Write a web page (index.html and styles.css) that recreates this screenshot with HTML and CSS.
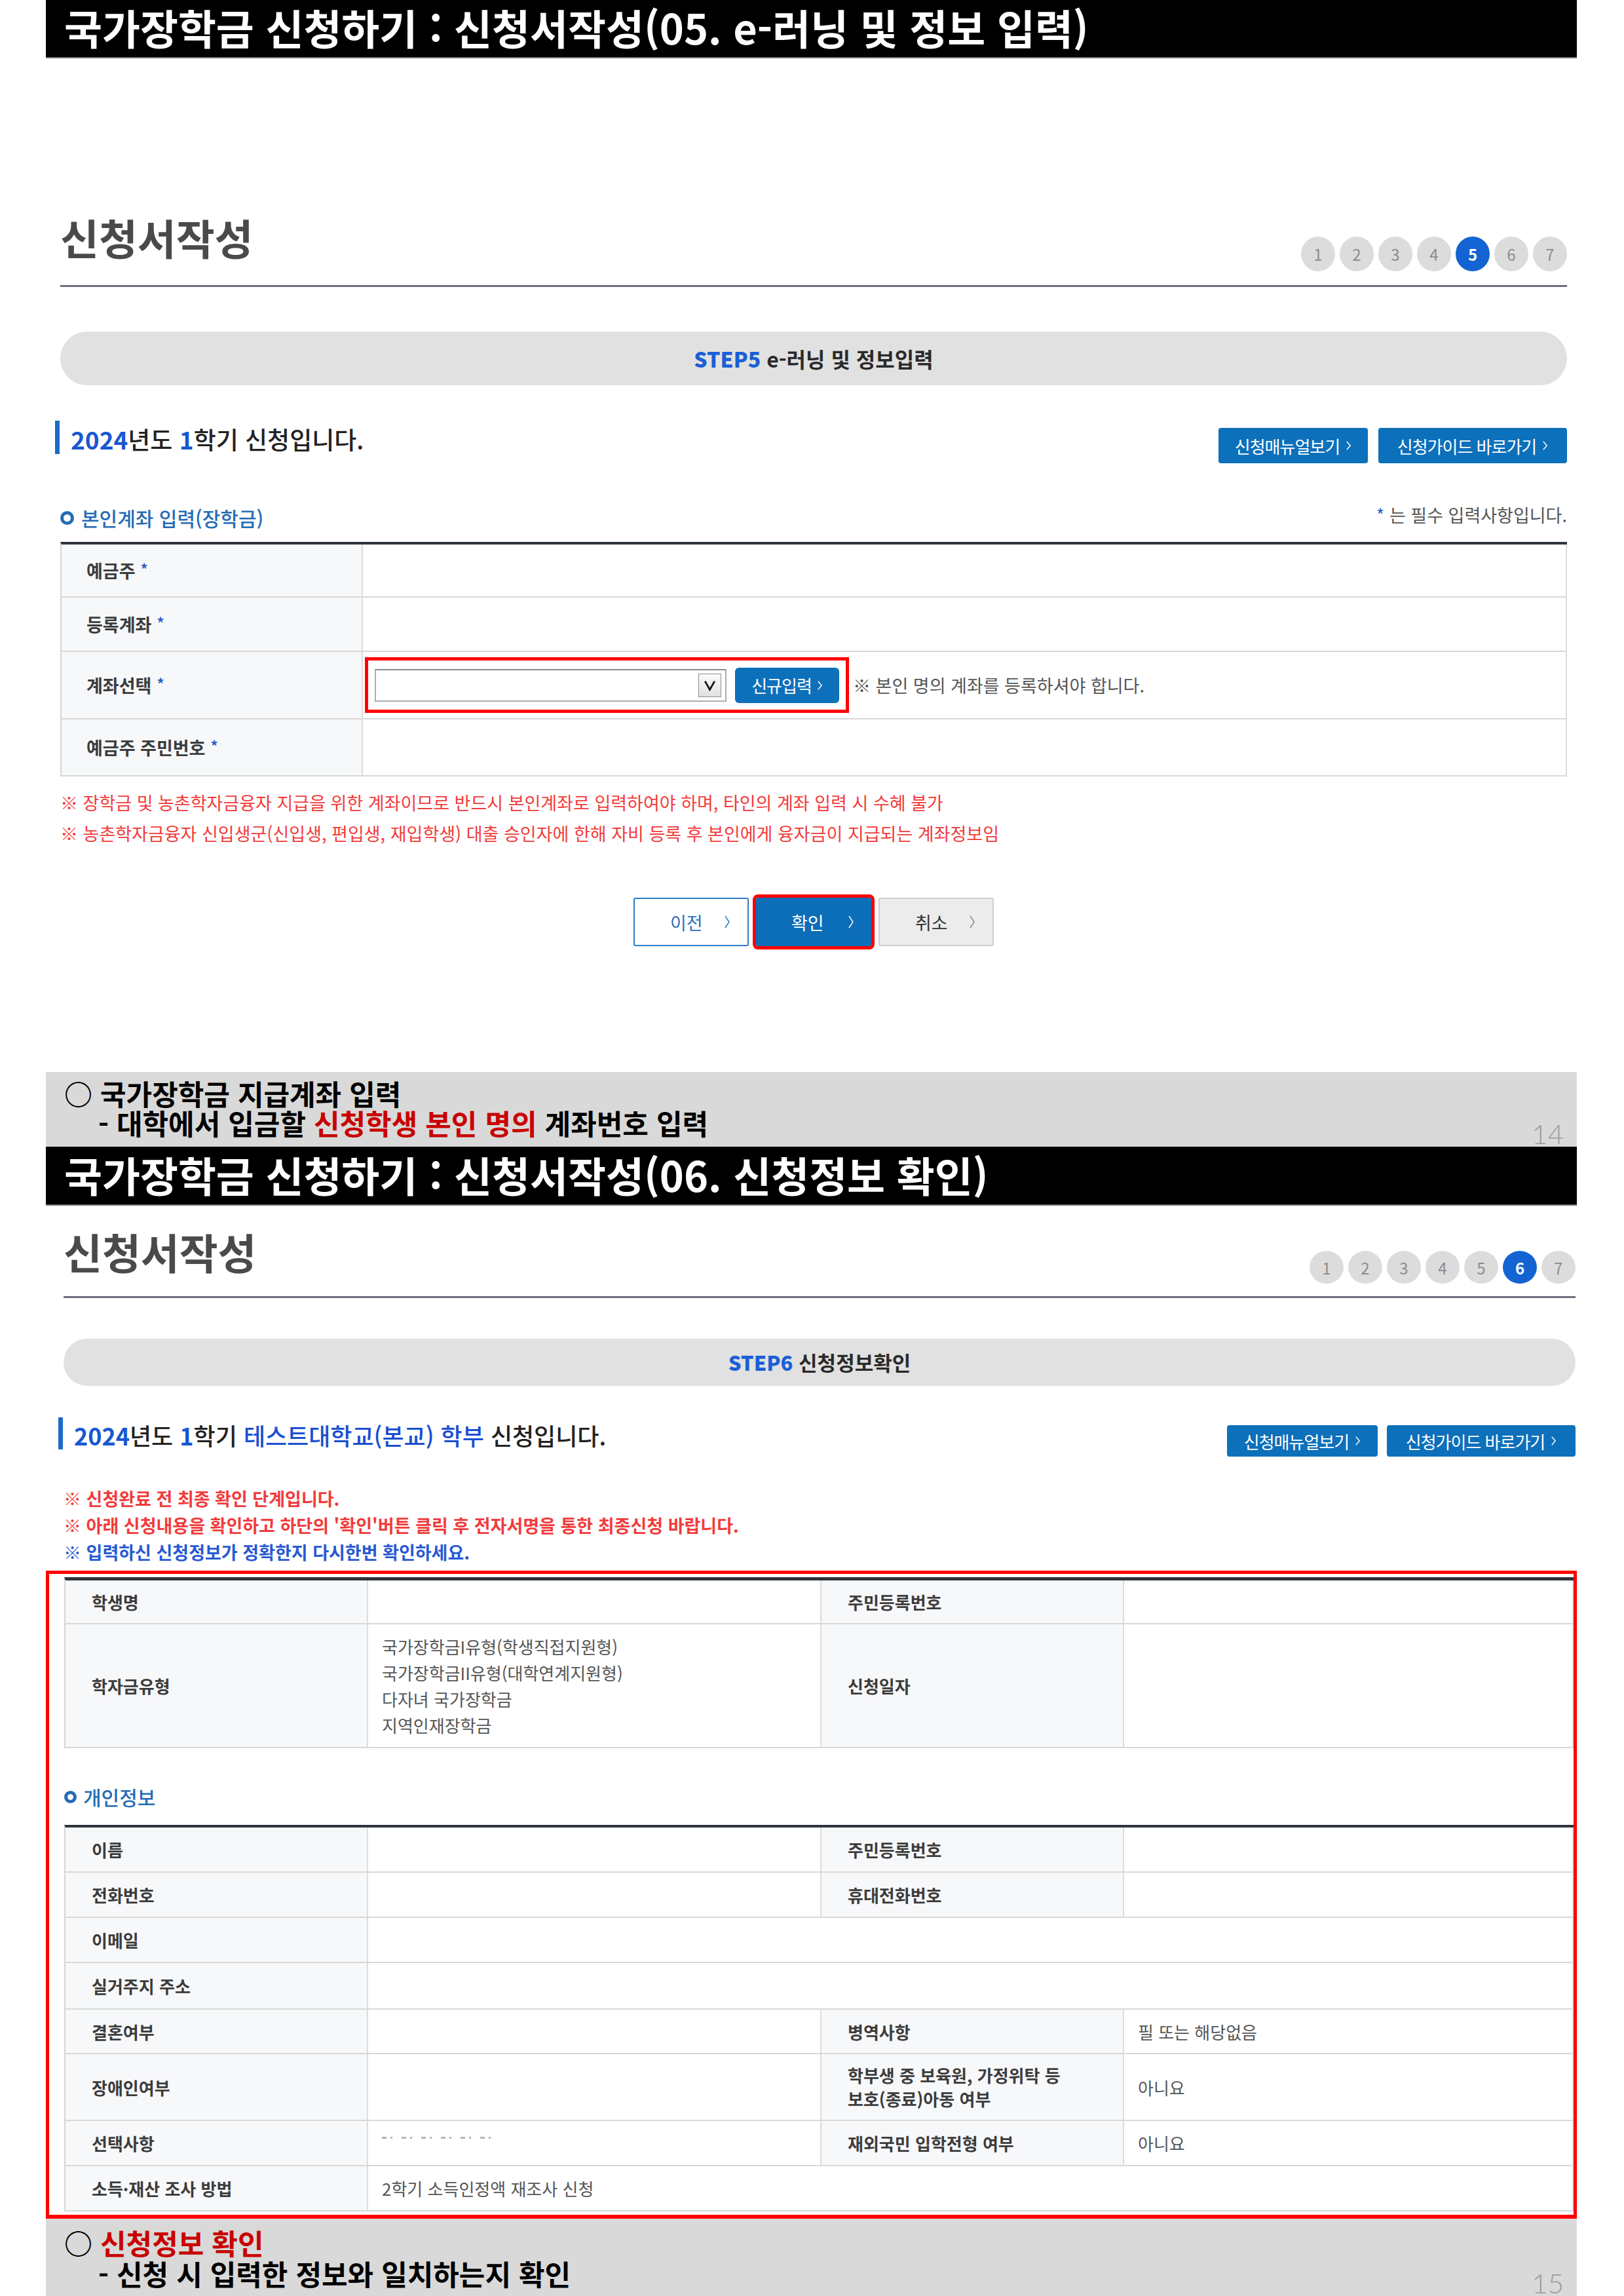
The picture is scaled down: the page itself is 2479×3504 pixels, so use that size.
FILE: index.html
```html
<!DOCTYPE html>
<html lang="ko">
<head>
<meta charset="utf-8">
<title>국가장학금 신청하기</title>
<link rel="stylesheet" href="styles.css">
</head>
<body>
<section class="slide slide-1">
  <h1 class="slide-title">국가장학금 신청하기 : 신청서작성(05. e-러닝 및 정보 입력)</h1>
  <div class="content content-1">
    <div class="page-head">
      <h2 class="page-title">신청서작성</h2>
      <ol class="steps">
        <li>1</li><li>2</li><li>3</li><li>4</li><li class="on">5</li><li>6</li><li>7</li>
      </ol>
    </div>
    <div class="step-pill"><b>STEP5</b> e-러닝 및 정보입력</div>
    <div class="term-row">
      <p class="term"><b>2024</b>년도 <b>1</b>학기 신청입니다.</p>
      <div class="guide-btns">
        <a class="btn-guide g1">신청매뉴얼보기 <svg class="chev" viewBox="0 0 10 20"><path d="M2 3 8 10 2 17"/></svg></a>
        <a class="btn-guide g2">신청가이드 바로가기 <svg class="chev" viewBox="0 0 10 20"><path d="M2 3 8 10 2 17"/></svg></a>
      </div>
    </div>
    <div class="sub-head">
      <h3 class="sub-title"><span class="ring"></span>본인계좌 입력(장학금)</h3>
      <p class="req-note"><span class="star">*</span> 는 필수 입력사항입니다.</p>
    </div>
    <div class="form-table t1">
      <div class="th">예금주<span class="star">*</span></div><div class="td"></div>
      <div class="th">등록계좌<span class="star">*</span></div><div class="td"></div>
      <div class="th">계좌선택<span class="star">*</span></div>
      <div class="td">
        <div class="mark-box">
          <div class="select-box"><span class="sel-arrow"><svg viewBox="0 0 36 36"><path d="M10 11 18 25 26 11"/></svg></span></div>
          <a class="btn-new">신규입력 <svg class="chev" viewBox="0 0 10 20"><path d="M2 3 8 10 2 17"/></svg></a>
        </div>
        <span class="acc-note">※ 본인 명의 계좌를 등록하셔야 합니다.</span>
      </div>
      <div class="th">예금주 주민번호<span class="star">*</span></div><div class="td"></div>
    </div>
    <ul class="warn warn-1">
      <li>※ 장학금 및 농촌학자금융자 지급을 위한 계좌이므로 반드시 본인계좌로 입력하여야 하며, 타인의 계좌 입력 시 수혜 불가</li>
      <li>※ 농촌학자금융자 신입생군(신입생, 편입생, 재입학생) 대출 승인자에 한해 자비 등록 후 본인에게 융자금이 지급되는 계좌정보임</li>
    </ul>
    <div class="actions">
      <a class="btn-act prev"><span>이전</span><svg class="chev2" viewBox="0 0 10 24"><path d="M2 3 8 12 2 21"/></svg></a>
      <a class="btn-act ok"><span>확인</span><svg class="chev2" viewBox="0 0 10 24"><path d="M2 3 8 12 2 21"/></svg></a>
      <a class="btn-act cancel"><span>취소</span><svg class="chev2" viewBox="0 0 10 24"><path d="M2 3 8 12 2 21"/></svg></a>
    </div>
  </div>
  <div class="memo memo-1">
    <div class="memo-text">
      <p class="memo-title">○ 국가장학금 지급계좌 입력</p>
      <p class="memo-sub">- 대학에서 입금할 <em>신청학생 본인 명의</em> 계좌번호 입력</p>
    </div>
    <span class="page-no">14</span>
  </div>
</section>

<section class="slide slide-2">
  <h1 class="slide-title">국가장학금 신청하기 : 신청서작성(06. 신청정보 확인)</h1>
  <div class="content content-2">
    <div class="page-head">
      <h2 class="page-title">신청서작성</h2>
      <ol class="steps">
        <li>1</li><li>2</li><li>3</li><li>4</li><li>5</li><li class="on">6</li><li>7</li>
      </ol>
    </div>
    <div class="step-pill"><b>STEP6</b> 신청정보확인</div>
    <div class="term-row">
      <p class="term"><b>2024</b>년도 <b>1</b>학기 <b class="reg">테스트대학교(본교) 학부</b> 신청입니다.</p>
      <div class="guide-btns">
        <a class="btn-guide g1">신청매뉴얼보기 <svg class="chev" viewBox="0 0 10 20"><path d="M2 3 8 10 2 17"/></svg></a>
        <a class="btn-guide g2">신청가이드 바로가기 <svg class="chev" viewBox="0 0 10 20"><path d="M2 3 8 10 2 17"/></svg></a>
      </div>
    </div>
    <ul class="warn warn-2">
      <li>※ 신청완료 전 최종 확인 단계입니다.</li>
      <li>※ 아래 신청내용을 확인하고 하단의 '확인'버튼 클릭 후 전자서명을 통한 최종신청 바랍니다.</li>
      <li class="blue">※ 입력하신 신청정보가 정확한지 다시한번 확인하세요.</li>
    </ul>
    <div class="mark-area">
      <div class="form-table wide t2">
        <div class="th">학생명</div><div class="td"></div>
        <div class="th">주민등록번호</div><div class="td"></div>
        <div class="th">학자금유형</div>
        <div class="td lines">국가장학금I유형(학생직접지원형)<br>국가장학금II유형(대학연계지원형)<br>다자녀 국가장학금<br>지역인재장학금</div>
        <div class="th">신청일자</div><div class="td"></div>
      </div>
      <h3 class="sub-title sub-2"><span class="ring"></span>개인정보</h3>
      <div class="form-table wide t3">
        <div class="th">이름</div><div class="td"></div>
        <div class="th">주민등록번호</div><div class="td"></div>
        <div class="th">전화번호</div><div class="td"></div>
        <div class="th">휴대전화번호</div><div class="td"></div>
        <div class="th">이메일</div><div class="td span3"></div>
        <div class="th">실거주지 주소</div><div class="td span3"></div>
        <div class="th">결혼여부</div><div class="td"></div>
        <div class="th">병역사항</div><div class="td">필 또는 해당없음</div>
        <div class="th">장애인여부</div><div class="td"></div>
        <div class="th two">학부생 중 보육원, 가정위탁 등<br>보호(종료)아동 여부</div><div class="td">아니요</div>
        <div class="th">선택사항</div><div class="td top"><span class="clip-text" aria-hidden="true"></span></div>
        <div class="th">재외국민 입학전형 여부</div><div class="td">아니요</div>
        <div class="th">소득·재산 조사 방법</div><div class="td span3">2학기 소득인정액 재조사 신청</div>
      </div>
    </div>
  </div>
  <div class="memo memo-2">
    <div class="memo-text">
      <p class="memo-title">○ <em>신청정보 확인</em></p>
      <p class="memo-sub">- 신청 시 입력한 정보와 일치하는지 확인</p>
    </div>
    <span class="page-no">15</span>
  </div>
</section>
</body>
</html>
```

FILE: styles.css
```css
* { box-sizing: border-box; margin: 0; padding: 0; }
html, body { background: #fff; }
body {
  width: 2479px;
  font-family: "Noto Sans CJK KR", "Noto Sans", sans-serif;
  color: #333;
}
a { text-decoration: none; }

.slide { width: 2337px; margin-left: 70px; }

.slide-title {
  height: 89px;
  background: #000;
  border-bottom: 2px solid #707070;
  color: #fff;
  font-size: 63px;
  font-weight: 700;
  line-height: 82px;
  padding-left: 28px;
  white-space: nowrap;
}
.slide-2 .slide-title { height: 90px; line-height: 84px; }

.content-1 { height: 1547px; padding: 237px 15px 0 22px; }
.content-2 { padding: 34px 2px 0 27px; }

/* heading row */
.page-head {
  display: flex;
  justify-content: space-between;
  align-items: flex-start;
  height: 112px;
  border-bottom: 3px solid #6d6d7d;
}
.content-2 .page-head { height: 107px; }
.page-title {
  font-size: 64px;
  font-weight: 700;
  color: #4a4a4a;
  line-height: 70px;
}
.steps { list-style: none; display: flex; gap: 7px; margin-top: 35px; }
.steps li {
  width: 52px;
  height: 53px;
  border-radius: 50%;
  background: #dcdcdc;
  color: #8c8c8c;
  font-size: 24px;
  display: flex;
  align-items: center;
  justify-content: center;
}
.steps li.on { background: #1364d2; color: #fff; font-weight: 700; }
.content-2 .steps li { height: 50px; }

/* step pill */
.step-pill {
  margin-top: 68px;
  height: 82px;
  border-radius: 41px;
  background: #e1e1e1;
  text-align: center;
  line-height: 82px;
  font-size: 32px;
  font-weight: 700;
  color: #2a2a2a;
}
.step-pill b { color: #1b5fd6; }
.content-2 .step-pill {
  margin-top: 62px;
  height: 72px;
  line-height: 72px;
  font-size: 31px;
  border-radius: 36px;
}

/* term row */
.term-row {
  display: flex;
  justify-content: space-between;
  align-items: flex-start;
  margin-top: 54px;
}
.content-2 .term-row { margin-top: 48px; }
.term {
  margin-left: -8px;
  height: 51px;
  border-left: 7px solid #1c6cc8;
  padding-left: 17px;
  font-size: 37px;
  font-weight: 500;
  line-height: 56px;
  color: #222;
  white-space: nowrap;
}
.content-2 .term { height: 49px; line-height: 54px; font-size: 36px; }
.term b { color: #1758d0; font-weight: 700; }
.term b.reg { font-weight: 500; color: #1a4fd0; }
.guide-btns { display: flex; gap: 16px; margin-top: 11px; }
.content-2 .guide-btns { gap: 14px; margin-top: 12px; }
.btn-guide {
  display: flex;
  align-items: center;
  justify-content: center;
  gap: 9px;
  height: 54px;
  background: #0d70bb;
  color: #fff;
  font-size: 26px;
  border-radius: 4px;
  letter-spacing: -1px;
}
.content-2 .btn-guide { height: 48px; }
.btn-guide.g1 { width: 228px; }
.content-2 .btn-guide.g1 { width: 230px; }
.btn-guide.g2 { width: 288px; }
.chev { width: 9px; height: 18px; fill: none; stroke: currentColor; stroke-width: 1.6; }
.chev2 { width: 10px; height: 24px; fill: none; stroke: currentColor; stroke-width: 1.4; }

/* sub heading */
.sub-head {
  display: flex;
  justify-content: space-between;
  align-items: center;
  margin-top: 63px;
  height: 40px;
}
.sub-title {
  display: flex;
  align-items: center;
  gap: 11px;
  font-size: 30px;
  font-weight: 500;
  line-height: 40px;
  color: #256cb4;
}
.ring {
  width: 21px;
  height: 21px;
  border: 5px solid #256cb4;
  border-radius: 50%;
  flex: none;
}
.sub-2 { margin-top: 54px; font-size: 30px; gap: 10px; }
.sub-2 .ring { width: 19px; height: 19px; border-width: 5px; }
.req-note { font-size: 27px; color: #555; margin-bottom: 10px; }
.star { color: #2a62c8; }

/* form tables */
.form-table {
  display: grid;
  margin-top: 17px;
  border-top: 4px solid #2f333b;
  border-left: 2px solid #d6d6d6;
}
.form-table > div {
  border-bottom: 2px solid #d8d8d8;
  border-right: 2px solid #dcdcdc;
  display: flex;
  align-items: center;
}
.th {
  background: #f7f8fa;
  padding-left: 38px;
  font-weight: 700;
  color: #3c3c3c;
}
.td { background: #fff; }
.th .star { font-size: 22px; margin-left: 8px; margin-bottom: 8px; }

.t1 { grid-template-columns: 460px 1fr; grid-template-rows: 81px 83px 103px 87px; }
.t1 .th { font-size: 27px; }

.mark-box {
  margin-left: 3px;
  width: 739px;
  height: 85px;
  border: 5px solid #ff0000;
  padding: 0 10px;
  display: flex;
  align-items: center;
  gap: 13px;
}
.select-box {
  width: 537px;
  height: 50px;
  border: 2px solid #adadad;
  border-top-color: #8c8c8c;
  background: #fff;
  display: flex;
  justify-content: flex-end;
  align-items: center;
  padding-right: 6px;
}
.sel-arrow {
  width: 35px;
  height: 36px;
  border: 1px solid #8e8e8e;
  background: linear-gradient(#fbfbfb, #e0e0e0);
  display: flex;
}
.sel-arrow svg { width: 100%; height: 100%; fill: none; stroke: #111; stroke-width: 3; }
.btn-new {
  width: 159px;
  height: 54px;
  background: #0d70bb;
  border-radius: 6px;
  color: #fff;
  font-size: 26px;
  display: flex;
  align-items: center;
  justify-content: center;
  gap: 8px;
  letter-spacing: -1px;
}
.acc-note { margin-left: 6px; font-size: 27px; color: #555; }

.wide { grid-template-columns: 462px 692px 462px 1fr; }
.wide .th { font-size: 26px; padding-left: 40px; }
.wide .td { font-size: 26px; color: #555; padding-left: 21px; }
.t2 { margin-top: 0; border-top-width: 5px; grid-template-rows: 67px 189px; }
.t3 { margin-top: 23px; grid-template-rows: 69px 69px 69px 71px 68px 102px 69px 69px; }
.span3 { grid-column: span 3; }
.td.lines { line-height: 40px; }
.th.two { line-height: 36px; }
.td.top { align-items: flex-start; }
.clip-text {
  display: block;
  width: 170px;
  height: 3px;
  margin-top: 24px;
  background: repeating-linear-gradient(90deg, #b5b5b5 0 7px, transparent 7px 13px, #b5b5b5 13px 16px, transparent 16px 30px);
}

/* notes */
.warn { list-style: none; margin-top: 16px; font-size: 27px; line-height: 47px; color: #f23b3b; white-space: nowrap; }
.warn-2 { margin-top: 43px; line-height: 41px; font-weight: 700; }
.warn .blue { color: #2759d3; }

/* action buttons */
.actions { display: flex; justify-content: center; gap: 11px; margin-top: 75px; }
.btn-act {
  width: 176px;
  height: 74px;
  display: flex;
  align-items: center;
  justify-content: space-between;
  padding: 0 26px 0 54px;
  font-size: 27px;
  border-radius: 3px;
}
.btn-act.prev { border: 2px solid #2f7cc9; color: #2b6fc0; background: #fff; }
.btn-act.ok { background: #0c6db8; color: #fff; outline: 5px solid #ff0000; }
.btn-act.cancel { background: #ececec; border: 2px solid #cfcfcf; color: #333; }
.btn-act.cancel .chev2 { color: #888; }

/* red highlight area */
.mark-area {
  margin: 8px -2px 0 -27px;
  border: 5px solid #ff0000;
  border-bottom-width: 6px;
  padding: 5px 0 5px 23px;
}

/* memo boxes */
.memo {
  display: flex;
  justify-content: space-between;
  background: #d9d9d9;
  height: 114px;
  padding: 0 20px 0 28px;
}
.memo-2 { height: 118px; }
.memo-text {
  padding-top: 10px;
  font-size: 43px;
  font-weight: 700;
  line-height: 45px;
  color: #000;
  white-space: nowrap;
}
.memo-2 .memo-text { padding-top: 13px; line-height: 47px; }
.memo-sub { padding-left: 52px; }
.memo em { font-style: normal; color: #c80000; }
.page-no {
  align-self: flex-end;
  font-family: "Lato", "Noto Sans", sans-serif;
  font-weight: 300;
  font-size: 42px;
  line-height: 42px;
  color: #9c9c9c;
  margin-bottom: -1px;
}
```
